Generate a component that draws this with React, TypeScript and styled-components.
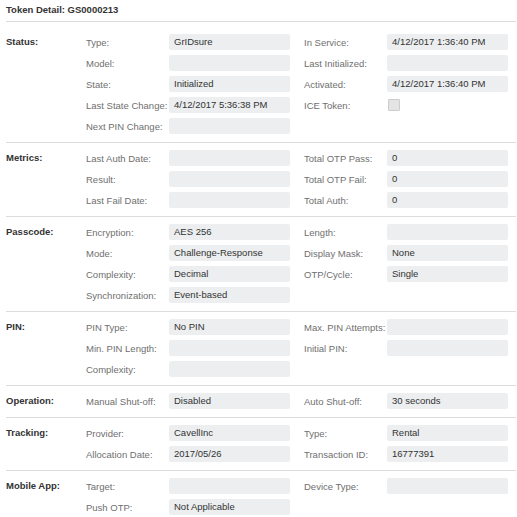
import React from "react";
import styled, { createGlobalStyle } from "styled-components";

type Field = { label: string; value?: string; check?: boolean } | null;

interface Section {
  title: string;
  rows: [Field, Field][];
}

const sections: Section[] = [
  {
    title: "Status:",
    rows: [
      [{ label: "Type:", value: "GrIDsure" }, { label: "In Service:", value: "4/12/2017 1:36:40 PM" }],
      [{ label: "Model:", value: "" }, { label: "Last Initialized:", value: "" }],
      [{ label: "State:", value: "Initialized" }, { label: "Activated:", value: "4/12/2017 1:36:40 PM" }],
      [{ label: "Last State Change:", value: "4/12/2017 5:36:38 PM" }, { label: "ICE Token:", check: true }],
      [{ label: "Next PIN Change:", value: "" }, null],
    ],
  },
  {
    title: "Metrics:",
    rows: [
      [{ label: "Last Auth Date:", value: "" }, { label: "Total OTP Pass:", value: "0" }],
      [{ label: "Result:", value: "" }, { label: "Total OTP Fail:", value: "0" }],
      [{ label: "Last Fail Date:", value: "" }, { label: "Total Auth:", value: "0" }],
    ],
  },
  {
    title: "Passcode:",
    rows: [
      [{ label: "Encryption:", value: "AES 256" }, { label: "Length:", value: "" }],
      [{ label: "Mode:", value: "Challenge-Response" }, { label: "Display Mask:", value: "None" }],
      [{ label: "Complexity:", value: "Decimal" }, { label: "OTP/Cycle:", value: "Single" }],
      [{ label: "Synchronization:", value: "Event-based" }, null],
    ],
  },
  {
    title: "PIN:",
    rows: [
      [{ label: "PIN Type:", value: "No PIN" }, { label: "Max. PIN Attempts:", value: "" }],
      [{ label: "Min. PIN Length:", value: "" }, { label: "Initial PIN:", value: "" }],
      [{ label: "Complexity:", value: "" }, null],
    ],
  },
  {
    title: "Operation:",
    rows: [[{ label: "Manual Shut-off:", value: "Disabled" }, { label: "Auto Shut-off:", value: "30 seconds" }]],
  },
  {
    title: "Tracking:",
    rows: [
      [{ label: "Provider:", value: "CavellInc" }, { label: "Type:", value: "Rental" }],
      [{ label: "Allocation Date:", value: "2017/05/26" }, { label: "Transaction ID:", value: "16777391" }],
    ],
  },
  {
    title: "Mobile App:",
    rows: [
      [{ label: "Target:", value: "" }, { label: "Device Type:", value: "" }],
      [{ label: "Push OTP:", value: "Not Applicable" }, null],
    ],
  },
];

const FieldCell: React.FC<{ field: Field }> = ({ field }) => {
  if (!field) return <Pair />;
  return (
    <Pair>
      <Label>{field.label}</Label>
      {field.check ? <Check /> : <Value>{field.value}</Value>}
    </Pair>
  );
};

const App: React.FC = () => {
  return (
    <Page>
      <GlobalStyle />
      <Header>Token Detail: GS0000213</Header>
      {sections.map((s) => (
        <Block key={s.title}>
          <BlockTitle>{s.title}</BlockTitle>
          <Grid>
            {s.rows.map((row, i) => (
              <React.Fragment key={i}>
                <FieldCell field={row[0]} />
                <FieldCell field={row[1]} />
              </React.Fragment>
            ))}
          </Grid>
        </Block>
      ))}
    </Page>
  );
};

export default App;

const GlobalStyle = createGlobalStyle`
  body {
    margin: 0;
    background: #ffffff;
    font-family: "Liberation Sans", Arial, sans-serif;
    font-size: 9.5px;
    color: #333333;
  }
`;

const Page = styled.div`
  width: 517px;
  padding: 0 1px 0 6px;
  box-sizing: border-box;
`;

const Header = styled.div`
  height: 21px;
  line-height: 20px;
  font-weight: bold;
  color: #333333;
  border-bottom: 1px solid #dddddd;
  margin-bottom: 5px;
`;

const Block = styled.div`
  display: flex;
  padding: 7px 0 8px;
  border-bottom: 1px solid #dddddd;

  &:last-child {
    border-bottom: none;
  }
`;

const BlockTitle = styled.div`
  width: 80px;
  flex-shrink: 0;
  font-weight: bold;
  line-height: 16px;
  color: #333333;
`;

const Grid = styled.div`
  display: grid;
  grid-template-columns: 204px 205px;
  column-gap: 14px;
  row-gap: 5px;
`;

const Pair = styled.div`
  display: flex;
  align-items: center;
  height: 16px;
`;

const Label = styled.div`
  width: 83px;
  flex-shrink: 0;
  color: #6f6f6f;
  white-space: nowrap;
`;

const Value = styled.div`
  width: 121px;
  height: 16px;
  line-height: 16px;
  padding-left: 5px;
  box-sizing: border-box;
  background: #eceeef;
  border-radius: 2px;
  color: #333333;
  white-space: nowrap;
  overflow: hidden;
`;

const Check = styled.div`
  width: 10px;
  height: 10px;
  margin-left: 1px;
  background: #e4e4e4;
  border: 1px solid #cccccc;
  border-radius: 1px;
`;
